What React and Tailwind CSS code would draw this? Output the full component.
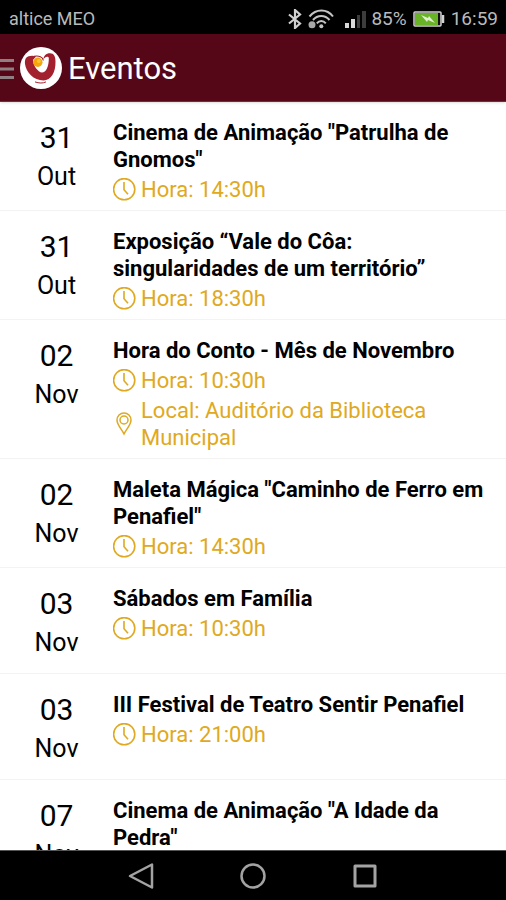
import React from 'react';

const events = [
  { day: '31', month: 'Out', title: 'Cinema de Animação "Patrulha de Gnomos"', time: '14:30h' },
  { day: '31', month: 'Out', title: 'Exposição “Vale do Côa: singularidades de um território”', time: '18:30h' },
  { day: '02', month: 'Nov', title: 'Hora do Conto - Mês de Novembro', time: '10:30h', place: 'Auditório da Biblioteca Municipal' },
  { day: '02', month: 'Nov', title: 'Maleta Mágica "Caminho de Ferro em Penafiel"', time: '14:30h' },
  { day: '03', month: 'Nov', title: 'Sábados em Família', time: '10:30h' },
  { day: '03', month: 'Nov', title: 'III Festival de Teatro Sentir Penafiel', time: '21:00h' },
  { day: '07', month: 'Nov', title: 'Cinema de Animação "A Idade da Pedra"' },
];

const ClockIcon = () => (
  <svg className="w-6 h-6 shrink-0" viewBox="0 0 24 24" fill="none" stroke="currentColor" strokeWidth="1.6" aria-hidden="true">
    <circle cx="11.2" cy="11.2" r="10.6" />
    <path d="M11 4v7.8l4 4.4" />
  </svg>
);

const PinIcon = () => (
  <svg className="w-6 h-6 shrink-0" viewBox="0 0 24 24" fill="none" stroke="currentColor" strokeWidth="1.5" aria-hidden="true">
    <path d="M11 22C9 17.5 4 13 4 8a7 7 0 0 1 14 0c0 5-5 9.5-7 14z" />
    <circle cx="11" cy="8" r="4" />
  </svg>
);

const Logo = () => (
  <svg className="w-[42px] h-[42px]" viewBox="0 0 42 42" aria-hidden="true">
    <circle cx="21" cy="21" r="21" fill="#fff" />
    <path
      d="M6 11C8 8.500 13 8 16 9.500L13 13c0 5 5 12.500 9 12.500s7-6 6.800-14.500c-.3-2-3.800-2-5.300 1.500C23.500 9 26 6.300 30 6.300c4 0 5.500 3.200 5.500 8.200.3 10.500-4.500 19-12 19C13.500 33.500 6 25 5 17c-.3-2.500 0-4.500 1-6z"
      fill="#a3212f"
    />
    <path d="M14 9.300c5-1 9 .7 9.300 4.200" fill="none" stroke="#a3212f" strokeWidth="1.2" />
    <path d="M15 34.900c4 1.500 8 1.500 11 0" fill="none" stroke="#a3212f" strokeWidth="1" />
    <circle cx="17.800" cy="15.200" r="4.700" fill="#f6a50b" />
    <circle cx="18.800" cy="14" r="2" fill="#fbc62f" />
  </svg>
);

const StatusBar = () => (
  <div className="h-[34px] shrink-0 bg-black text-[#bababa] flex items-center justify-between pl-[9px] pr-2 pt-1 text-[18px] leading-6">
    <span>altice MEO</span>
    <div className="flex items-center text-[19px]">
      <svg className="w-4 h-5 mr-1" viewBox="0 0 16 20" fill="none" stroke="#d0d0d0" strokeWidth="2.2" aria-hidden="true">
        <path d="M2 5.500l11 9L8 19V1l5 4.500-11 9" />
      </svg>
      <svg className="w-7 h-5 mr-2" viewBox="0 0 28 20" fill="none" stroke="#c4c4c4" strokeWidth="2" aria-hidden="true">
        <path d="M2.500 7.500C9-.5 20-.5 26 7.500M6 11c4.500-5.500 12-5.500 16.500 0M9.800 14.300c2.500-3 6.500-3 9 0" />
        <circle cx="14.300" cy="17.300" r="2" fill="#c4c4c4" stroke="none" />
        <circle cx="5" cy="15.800" r="3.500" fill="#a8a8a8" stroke="none" />
      </svg>
      <svg className="w-6 h-5 mr-1" viewBox="0 0 24 20" aria-hidden="true">
        <path d="M2 14h4v5H2z" fill="#d8d8d8" />
        <path d="M8 10h4v9H8z" fill="#d8d8d8" />
        <path d="M14 6h3v13h-3z" fill="#3c3c3c" />
        <path d="M19 2h4v17h-4z" fill="#3c3c3c" />
      </svg>
      <span>85%</span>
      <svg className="w-8 h-4 ml-[6px] mr-[6px]" viewBox="0 0 32 16" aria-hidden="true">
        <rect x="1" y="1" width="27" height="14" rx="1" fill="#111" stroke="#d2d2d2" strokeWidth="1.5" />
        <path d="M30 4v8" stroke="#d2d2d2" strokeWidth="2.5" />
        <rect x="2" y="2" width="23" height="12" fill="#69b327" />
        <path d="M8 4l7 3 1-2 6 7-7-3-1 2z" fill="#e0efcf" />
      </svg>
      <span>16:59</span>
    </div>
  </div>
);

const EventRow = ({ event }) => (
  <li className="flex border-b border-[#f3f3f3] pt-[17px] pb-[7px]">
    <div className="w-[113px] shrink-0 text-center pb-1">
      <div className="text-[30px] leading-[38px]">{event.day}</div>
      <div className="text-[25px] leading-[39px]">{event.month}</div>
    </div>
    <div className="flex-1 pr-3">
      <h2 className="text-[22px] leading-[27px] font-bold">{event.title}</h2>
      {event.time && (
        <p className="flex items-center gap-1 mt-[3px] text-[22px] leading-[27px] text-[#dfa921]">
          <ClockIcon />
          <span>Hora: {event.time}</span>
        </p>
      )}
      {event.place && (
        <p className="flex items-center gap-1 mt-[3px] text-[22px] leading-[27px] text-[#dfa921]">
          <PinIcon />
          <span>Local: {event.place}</span>
        </p>
      )}
    </div>
  </li>
);

export default function App() {
  return (
    <div className="h-screen flex flex-col bg-white text-black font-[Roboto,sans-serif]">
      <StatusBar />

      {/* App bar */}
      <header className="h-[68px] shrink-0 bg-[#550718] border-b border-[#6b3038] flex items-center text-white shadow-sm z-10">
        <button className="h-12 w-5 flex items-center" aria-label="Menu">
          <svg className="w-[14px] h-[24px]" viewBox="0 0 14 24" stroke="#8f7f82" strokeWidth="3" aria-hidden="true">
            <path d="M0 4.500h14M0 13h14M0 21.500h14" />
          </svg>
        </button>
        <Logo />
        <h1 className="ml-[6px] pt-[3px] text-[31px] leading-10">Eventos</h1>
      </header>

      {/* Event list */}
      <main className="flex-1 min-h-0 overflow-hidden">
        <ul>
          {events.map((event, idx) => (
            <EventRow key={idx} event={event} />
          ))}
        </ul>
      </main>

      {/* Navigation bar */}
      <nav className="h-[50px] shrink-0 bg-black border-t border-[#555] flex items-center justify-center gap-[84px] text-[#a3a3a3]">
        <button aria-label="Voltar">
          <svg className="w-7 h-7" viewBox="0 0 28 28" fill="none" stroke="currentColor" strokeWidth="2.5" strokeLinejoin="round" aria-hidden="true">
            <path d="M25 2.500v23L3 14z" />
          </svg>
        </button>
        <button aria-label="Início">
          <svg className="w-7 h-7" viewBox="0 0 28 28" fill="none" stroke="currentColor" strokeWidth="2.5" aria-hidden="true">
            <circle cx="14" cy="14" r="11.5" />
          </svg>
        </button>
        <button aria-label="Recentes">
          <svg className="w-7 h-7" viewBox="0 0 28 28" fill="none" stroke="currentColor" strokeWidth="3" strokeLinejoin="round" aria-hidden="true">
            <rect x="4" y="4" width="20" height="20" />
          </svg>
        </button>
      </nav>
    </div>
  );
}
